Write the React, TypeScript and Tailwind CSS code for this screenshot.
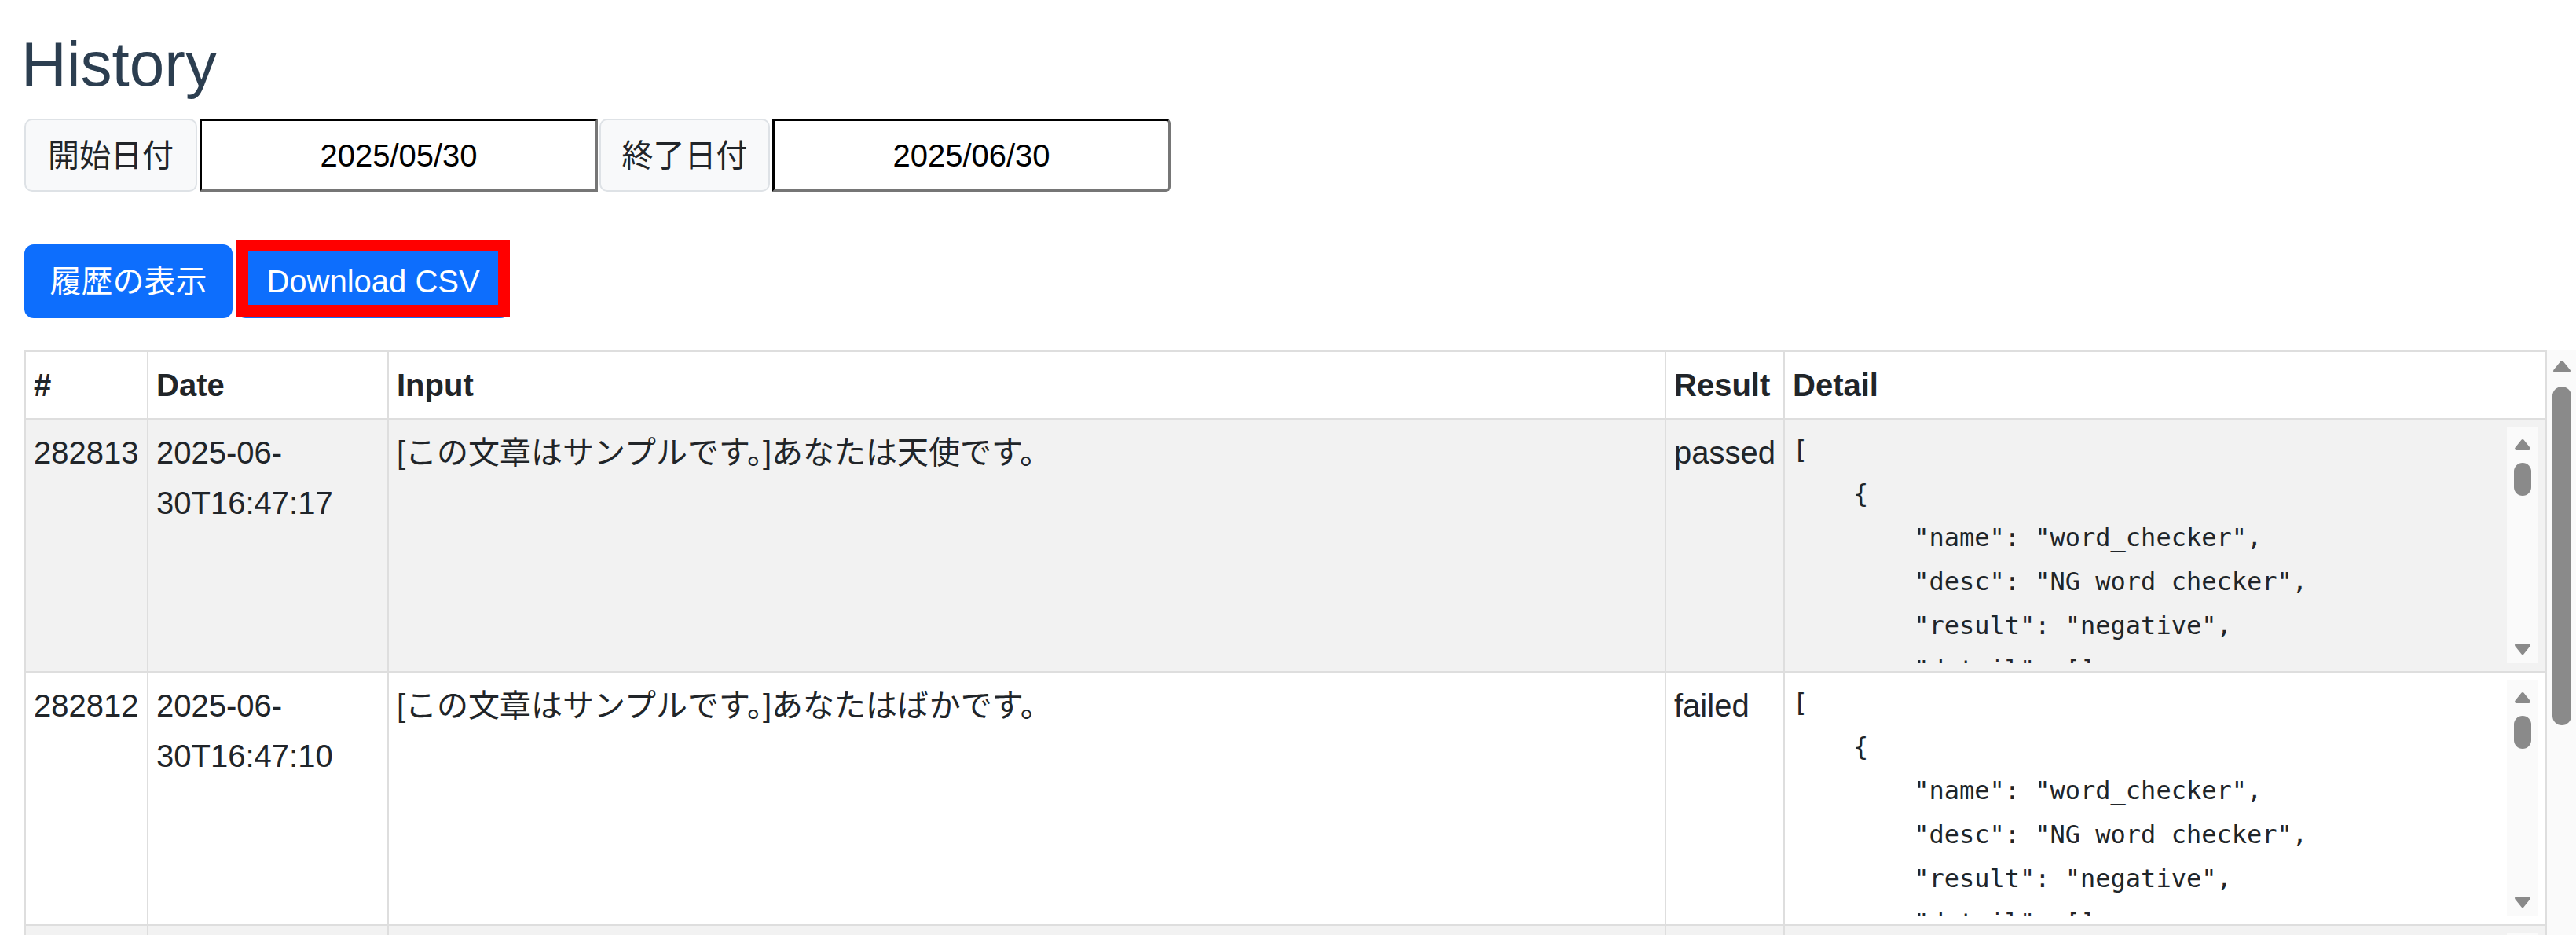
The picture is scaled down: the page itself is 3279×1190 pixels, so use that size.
import React from 'react';

type Row = {
  id: string;
  date: [string, string];
  input: string;
  result: string;
};

const rows: Row[] = [
  { id: '282813', date: ['2025-06-', '30T16:47:17'], input: '[この文章はサンプルです。]あなたは天使です。', result: 'passed' },
  { id: '282812', date: ['2025-06-', '30T16:47:10'], input: '[この文章はサンプルです。]あなたはばかです。', result: 'failed' },
  { id: '282811', date: ['2025-06-', '30T16:46:58'], input: '[この文章はサンプルです。]今日はいい天気です。', result: 'passed' },
];

const detailLines = [
  '[',
  '    {',
  '        "name": "word_checker",',
  '        "desc": "NG word checker",',
  '        "result": "negative",',
  '        "detail": [],',
  '        "score": 0',
  '    }',
  ']',
];

function Arrow({ down, w = 22, h = 16 }: { down?: boolean; w?: number; h?: number }) {
  const d = down ? `M3 3 H${w - 3} L${w / 2} ${h - 3} Z` : `M3 ${h - 3} H${w - 3} L${w / 2} 3 Z`;
  return (
    <svg width={w} height={h} viewBox={`0 0 ${w} ${h}`}>
      <path d={d} fill="#8a8a8a" stroke="#8a8a8a" strokeWidth="4" strokeLinejoin="round" />
    </svg>
  );
}

function DetailBox() {
  return (
    <div className="flex h-[300px] w-full">
      <div className="flex-1 overflow-hidden whitespace-pre font-['DejaVu_Sans_Mono',monospace] text-[32px] leading-[56px] text-[#212529]">
        {detailLines.join('\n')}
      </div>
      <div className="flex w-[39px] flex-col items-center bg-[#fafafa] pt-[14px] pb-[10px]">
        <Arrow />
        <div className="mt-[15px] h-[42px] w-[22px] rounded-full bg-[#8a8a8a]" />
        <div className="flex-1" />
        <Arrow down />
      </div>
    </div>
  );
}

export default function App() {
  return (
    <div className="h-[1190px] w-[3279px] overflow-hidden bg-white font-['Liberation_Sans','Noto_Sans_CJK_JP',sans-serif] text-[#212529]">
      <div className="pl-[31px]">
        <h1 className="-ml-[4px] pt-[36px] text-[80px] font-normal leading-[92px] text-[#2c3e50]">History</h1>

        <div className="mt-[23px] flex h-[93px] text-[40px]">
          <span className="flex w-[220px] items-center justify-center rounded-[10px] border-2 border-[#dee2e6] bg-[#f8f9fa]">開始日付</span>
          <input
            readOnly
            value="2025/05/30"
            className="ml-[3px] w-[507px] border-[3px] border-t-black border-l-black border-r-[#767676] border-b-[#767676] bg-white text-center text-black outline-none"
          />
          <span className="ml-[2px] flex w-[217px] items-center justify-center rounded-[10px] border-2 border-[#dee2e6] bg-[#f8f9fa]">終了日付</span>
          <input
            readOnly
            value="2025/06/30"
            className="ml-[3px] w-[507px] rounded-r-[6px] border-[3px] border-t-black border-l-black border-r-[#767676] border-b-[#767676] bg-white text-center text-black outline-none"
          />
        </div>

        <div className="mt-[67px] flex h-[94px] gap-[5px] text-[40px] text-white">
          <button className="w-[265px] rounded-[12px] bg-[#0d6efd]">履歴の表示</button>
          <div className="relative w-[348px]">
            <button className="h-full w-full rounded-[12px] bg-[#0d6efd]">Download CSV</button>
            <div className="pointer-events-none absolute -top-[6px] right-0 bottom-[2px] left-0 border-[15px] border-[#ff0000]" />
          </div>
        </div>

        <div className="mt-[41px] flex">
          <table className="w-[3209px] table-fixed border-collapse text-[40px] leading-[64px]">
            <thead>
              <tr className="bg-white">
                <th className="w-[156px] border-2 border-[#dedede] p-[10px] text-left font-bold">#</th>
                <th className="w-[306px] border-2 border-[#dedede] p-[10px] text-left font-bold">Date</th>
                <th className="w-[1626px] border-2 border-[#dedede] p-[10px] text-left font-bold">Input</th>
                <th className="w-[151px] border-2 border-[#dedede] p-[10px] text-left font-bold">Result</th>
                <th className="w-[970px] border-2 border-[#dedede] p-[10px] text-left font-bold">Detail</th>
              </tr>
            </thead>
            <tbody>
              {rows.map((r, i) => (
                <tr key={r.id} className={i % 2 === 0 ? 'bg-[#f2f2f2]' : 'bg-white'}>
                  <td className="border-2 border-[#dedede] p-[10px] align-top">{r.id}</td>
                  <td className="border-2 border-[#dedede] p-[10px] align-top">
                    {r.date[0]}
                    <wbr />
                    {r.date[1]}
                  </td>
                  <td className="border-2 border-[#dedede] p-[10px] align-top">{r.input}</td>
                  <td className="border-2 border-[#dedede] p-[10px] align-top">{r.result}</td>
                  <td className="border-2 border-[#dedede] p-[10px] align-top">
                    <DetailBox />
                  </td>
                </tr>
              ))}
            </tbody>
          </table>

          <div className="flex w-[39px] flex-col items-center bg-[#fafafa] pt-[12px]">
            <Arrow w={24} h={17} />
            <div className="mt-[17px] h-[431px] w-[24px] rounded-full bg-[#8a8a8a]" />
          </div>
        </div>
      </div>
    </div>
  );
}
